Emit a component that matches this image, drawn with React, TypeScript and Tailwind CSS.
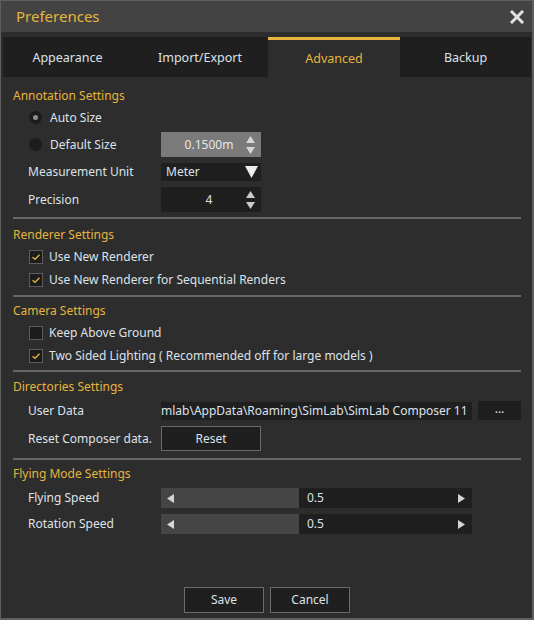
import type { ReactNode } from "react";

const font = { fontFamily: '"Noto Sans", "Open Sans", Arial, sans-serif' };

function Heading({ children, className = "" }: { children: ReactNode; className?: string }) {
  return (
    <div className={`flex h-5 items-center text-[12px] text-[#e6b53c] ${className}`}>{children}</div>
  );
}

function Separator({ className = "" }: { className?: string }) {
  return <div className={`h-[2px] bg-[#666666] ${className}`} />;
}

function Label({ children }: { children: ReactNode }) {
  return (
    <div className="w-[148px] shrink-0 pl-[15px] text-[12px] text-[#dde2ea] whitespace-nowrap">{children}</div>
  );
}

function Spinner({ light = false }: { light?: boolean }) {
  const c = light ? "#d6d6d6" : "#c9c9c9";
  return (
    <svg width="11" height="22" viewBox="0 0 11 22" className="shrink-0">
      <polygon points="5.5,2 10,9 1,9" fill={c} />
      <polygon points="1,13 10,13 5.5,20" fill={c} />
    </svg>
  );
}

function Checkbox({ checked }: { checked: boolean }) {
  return (
    <div className="flex h-[14px] w-[14px] shrink-0 items-center justify-center border border-[#5c5c5c] bg-[#1c1c1c]">
      {checked && (
        <svg width="10" height="8" viewBox="0 0 10 8">
          <path d="M1.5 4.2 L4 6.3 L8.5 1.8" stroke="#d9ab3a" strokeWidth="1.5" fill="none" />
        </svg>
      )}
    </div>
  );
}

function CheckRow({ checked, children }: { checked: boolean; children: ReactNode }) {
  return (
    <div className="flex h-[23px] items-center gap-[6px] pl-[16px] text-[12px] text-[#dde2ea]">
      <Checkbox checked={checked} />
      <span className="whitespace-nowrap">{children}</span>
    </div>
  );
}

function SliderRow({ label, className = "" }: { label: string; className?: string }) {
  return (
    <div className={`flex h-5 items-center ${className}`}>
      <Label>{label}</Label>
      <div className="relative flex h-5 w-[311px] items-center bg-[#1f1f1f] text-[12px] text-[#dde2ea]">
        <div className="flex h-full w-[138px] items-center bg-[#454545] pl-[6px]">
          <svg width="7" height="9" viewBox="0 0 7 9">
            <polygon points="7,0 7,9 0,4.5" fill="#d4d4d4" />
          </svg>
        </div>
        <span className="pl-[8px]">0.5</span>
        <svg width="7" height="9" viewBox="0 0 7 9" className="absolute right-[7px] top-[5.5px]">
          <polygon points="0,0 7,4.5 0,9" fill="#d4d4d4" />
        </svg>
      </div>
    </div>
  );
}

export default function App() {
  return (
    <div
      style={font}
      className="flex h-[620px] w-[534px] flex-col border-t border-l border-r-2 border-b-2 border-[#5e5e5e] bg-[#2d2d2d]"
    >
      {/* title bar */}
      <div className="flex h-[31px] shrink-0 items-center justify-between bg-[#434343] pl-[15px] pr-[8px]">
        <span className="text-[15px] text-[#e6b53c]">Preferences</span>
        <svg width="14" height="14" viewBox="0 0 14 14">
          <path d="M2 2 L12 12 M12 2 L2 12" stroke="#e2e2e2" strokeWidth="3" strokeLinecap="square" />
        </svg>
      </div>

      {/* tabs */}
      <div className="mt-[5px] ml-[2px] flex h-[40px] shrink-0 text-[12.5px]">
        <div className="flex w-[129px] items-center justify-center bg-[#1f1f1f] pt-[3px] text-[#dde2ea]">Appearance</div>
        <div className="flex w-[136px] items-center justify-center bg-[#1f1f1f] pt-[3px] text-[#dde2ea]">Import/Export</div>
        <div className="flex w-[132px] items-center justify-center border-t-[3px] border-[#e6b53c] bg-[#2d2d2d] pt-[1px] text-[#e6b53c]">
          Advanced
        </div>
        <div className="flex w-[131px] items-center justify-center bg-[#1f1f1f] pt-[3px] text-[#dde2ea]">Backup</div>
      </div>

      {/* body */}
      <div className="flex flex-1 flex-col pl-[12px] pr-[11px]">
        <Heading className="mt-[9px]">Annotation Settings</Heading>

        <div className="flex h-[23px] items-center gap-[8px] pl-[16px] text-[12px] text-[#dde2ea]">
          <div className="flex h-[13px] w-[13px] items-center justify-center rounded-full bg-[#1c1c1c]">
            <div className="h-[5px] w-[5px] rounded-full bg-[#8f8f8f]" />
          </div>
          <span>Auto Size</span>
        </div>

        <div className="mt-[3px] flex h-[25px] items-center">
          <div className="flex w-[148px] shrink-0 items-center gap-[8px] pl-[16px] text-[12px] text-[#dde2ea]">
            <div className="h-[13px] w-[13px] rounded-full bg-[#1c1c1c]" />
            <span>Default Size</span>
          </div>
          <div className="flex h-full w-[100px] items-center bg-[#7a7a7a] pr-[5px] text-[12px] text-[#e6e6e6]">
            <span className="flex-1 pl-[12px] text-center">0.1500m</span>
            <Spinner light />
          </div>
        </div>

        <div className="mt-[6px] flex h-[18px] items-center">
          <Label>Measurement Unit</Label>
          <div className="flex h-full w-[100px] items-center justify-between bg-[#1f1f1f] pl-[5px] pr-[3px] text-[12px] text-[#dde2ea]">
            <span>Meter</span>
            <svg width="13" height="12" viewBox="0 0 13 12">
              <polygon points="0,0 13,0 6.5,12" fill="#ededed" />
            </svg>
          </div>
        </div>

        <div className="mt-[6px] flex h-[25px] items-center">
          <Label>Precision</Label>
          <div className="flex h-full w-[100px] items-center bg-[#1f1f1f] pr-[5px] text-[12px] text-[#dde2ea]">
            <span className="flex-1 pl-[12px] text-center">4</span>
            <Spinner />
          </div>
        </div>

        <Separator className="mt-[5px]" />

        <Heading className="mt-[6px]">Renderer Settings</Heading>
        <CheckRow checked>Use New Renderer</CheckRow>
        <CheckRow checked>Use New Renderer for Sequential Renders</CheckRow>

        <Separator className="mt-[4px]" />

        <Heading className="mt-[4px]">Camera Settings</Heading>
        <CheckRow checked={false}>Keep Above Ground</CheckRow>
        <CheckRow checked>Two Sided Lighting ( Recommended off for large models )</CheckRow>

        <Separator className="mt-[3px]" />

        <Heading className="mt-[5px]">Directories Settings</Heading>

        <div className="mt-[4px] flex h-[19px] items-center">
          <Label>User Data</Label>
          <div className="flex h-[18px] w-[311px] items-center overflow-hidden bg-[#1f1f1f] text-[12px] text-[#dde2ea] whitespace-nowrap">
            mlab\AppData\Roaming\SimLab\SimLab Composer 11
          </div>
          <div className="ml-[6px] flex h-[19px] w-[43px] items-center justify-center bg-[#1f1f1f] pb-[4px] text-[12px] text-[#dde2ea]">
            ...
          </div>
        </div>

        <div className="mt-[6px] flex h-[25px] items-center">
          <Label>Reset Composer data.</Label>
          <div className="flex h-full w-[100px] items-center justify-center border border-[#6a6a6a] bg-[#1f1f1f] text-[12px] text-[#dde2ea]">
            Reset
          </div>
        </div>

        <Separator className="mt-[7px]" />

        <Heading className="mt-[4px]">Flying Mode Settings</Heading>
        <SliderRow label="Flying Speed" className="mt-[4px]" />
        <SliderRow label="Rotation Speed" className="mt-[6px]" />

        <div className="flex-1" />

        <div className="mb-[5px] flex justify-center gap-[6px] text-[12px] text-[#dde2ea]">
          <div className="flex h-[26px] w-[80px] items-center justify-center border border-[#6a6a6a] bg-[#1f1f1f]">Save</div>
          <div className="flex h-[26px] w-[80px] items-center justify-center border border-[#6a6a6a] bg-[#1f1f1f]">Cancel</div>
        </div>
      </div>
    </div>
  );
}
